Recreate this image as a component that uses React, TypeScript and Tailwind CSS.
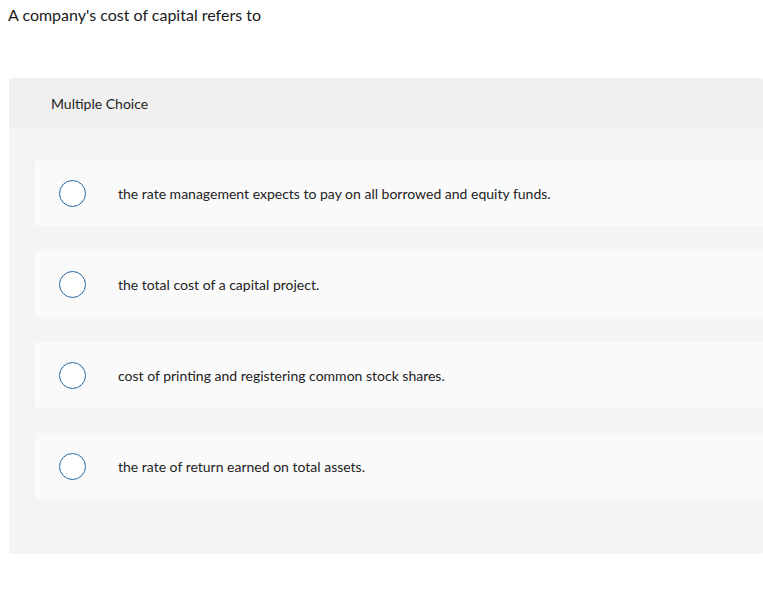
const options = [
  'the rate management expects to pay on all borrowed and equity funds.',
  'the total cost of a capital project.',
  'cost of printing and registering common stock shares.',
  'the rate of return earned on total assets.',
];

export default function App() {
  return (
    <div
      className="min-h-[606px] w-[763px] overflow-hidden bg-white text-[#1a1a1a]"
      style={{ fontFamily: 'Lato, "Open Sans", Arial, sans-serif' }}
    >
      <p className="pl-[8px] pt-[5px] text-[16px] leading-[20px]">A company's cost of capital refers to</p>

      <div className="ml-[9px] mt-[53px] w-[754px] overflow-hidden rounded-[3px] bg-[#f4f4f4]">
        <div className="flex h-[50px] items-center bg-[#f0f0f0] pl-[42px] text-[14px] text-[#222]">
          Multiple Choice
        </div>
        <div className="flex flex-col gap-[25px] pb-[55px] pl-[26px] pt-[32px]">
          {options.map((text) => (
            <div key={text} className="flex h-[66px] items-center rounded-l-[3px] bg-[#fafafa]">
              <span className="ml-[24px] mt-[1px] h-[27px] w-[27px] shrink-0 rounded-full border-[1.5px] border-[#2566a0] bg-white" />
              <span className="ml-[32px] text-[14px] text-[#222]">{text}</span>
            </div>
          ))}
        </div>
      </div>
    </div>
  );
}
